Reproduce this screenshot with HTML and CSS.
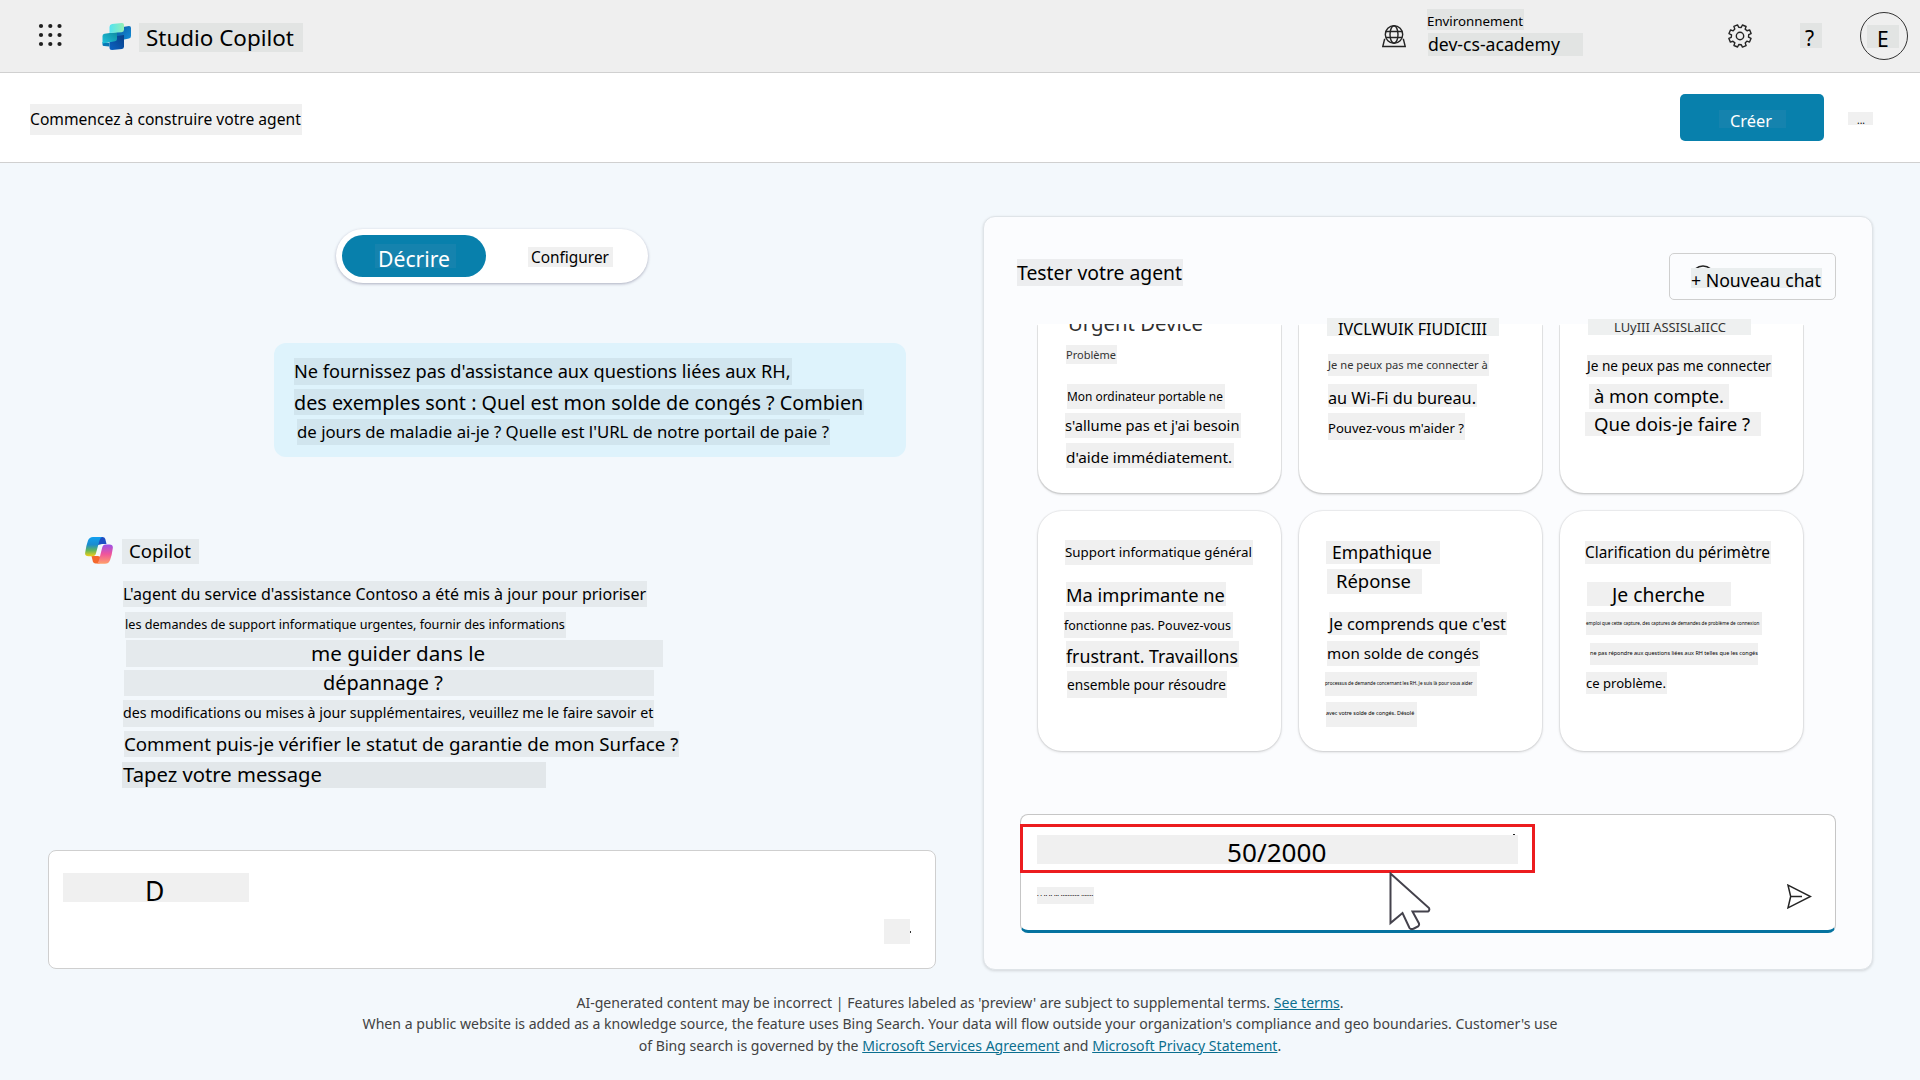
FILE: index.html
```html
<!DOCTYPE html>
<html lang="fr">
<head>
<meta charset="utf-8">
<title>Studio Copilot</title>
<link rel="stylesheet" href="styles.css">
</head>
<body>
<header class="topbar">
  <svg class="waffle" width="24" height="24" viewBox="0 0 24 24" fill="#1f1f1f"><circle cx="3" cy="3" r="2.1"/><circle cx="12.3" cy="3" r="2.1"/><circle cx="21.5" cy="3" r="2.1"/><circle cx="3" cy="12" r="2.1"/><circle cx="12.3" cy="12" r="2.1"/><circle cx="21.5" cy="12" r="2.1"/><circle cx="3" cy="21" r="2.1"/><circle cx="12.3" cy="21" r="2.1"/><circle cx="21.5" cy="21" r="2.1"/></svg>
  <svg class="studio-logo" width="29" height="27" viewBox="0 0 29 27">
    <defs>
      <linearGradient id="s1" x1="0" y1="0" x2="1" y2="0"><stop offset="0" stop-color="#53e3f2"/><stop offset="1" stop-color="#94efb4"/></linearGradient>
      <linearGradient id="s2" x1="0" y1="1" x2="1" y2="0"><stop offset="0" stop-color="#20c3dd"/><stop offset="1" stop-color="#0d8a9f"/></linearGradient>
      <linearGradient id="s3" x1="0" y1="0" x2="1" y2="1"><stop offset="0" stop-color="#0a5aa8"/><stop offset="1" stop-color="#1590d8"/></linearGradient>
      <linearGradient id="s4" x1="0" y1="1" x2="1" y2="0"><stop offset="0" stop-color="#0b63c4"/><stop offset="1" stop-color="#083f86"/></linearGradient>
    </defs>
    <path d="M15 5 L27 3 Q29 3 29 5 V13 Q29 15 27 15.500L15 18Z" fill="url(#s3)"/>
    <path d="M7.500 14 L22 12 V23.500 Q22 25.500 20 26 L10 27 Q7.500 27 7.500 24.500Z" fill="url(#s4)"/>
    <path d="M.5 19 L7.500 20 V23.500 L2 23 Q.5 23 .5 21.500Z" fill="#0878b6"/>
    <path d="M.5 13 Q.5 11 2.500 10.700 L15 9 V16 Q15 18 13 18.300 L.5 20.500Z" fill="url(#s2)"/>
    <path d="M7.500 4 Q7.500 1.500 10 1.100 L20 0 Q22 0 22 2 V6.500 Q22 9 19.500 9.200 L7.500 10Z" fill="url(#s1)"/>
  </svg>
  <span class="t t-brand">Studio Copilot</span>
  <svg class="env-icon" width="24" height="23" viewBox="0 0 24 23" fill="none" stroke="#242424" stroke-width="1.400"><circle cx="12" cy="9.500" r="8.700"/><ellipse cx="12" cy="9.500" rx="4" ry="8.700"/><path d="M4 6.500H20M4 12.500H20M3.300 14.500H2.500L.8 21.500H23.200L21.500 14.500H20.700"/></svg>
  <div class="env">
    <span class="t t-env">Environnement</span>
    <span class="t t-envname">dev-cs-academy</span>
  </div>
  <svg class="gear" width="24" height="24" viewBox="-12 -12 24 24" fill="none" stroke="#242424" stroke-width="1.400" stroke-linejoin="round"><path transform="rotate(22.500)" d="M8.300-2.130L11.100-1.980V1.980L8.300 2.130L7.540 4.530L9.340 6.540L6.540 9.340L4.530 7.540L2.130 8.300L1.980 11.100H-1.980L-2.130 8.300L-4.530 7.540L-6.540 9.340L-9.340 6.540L-7.540 4.530L-8.300 2.130L-11.100 1.980V-1.980L-8.300-2.130L-7.540-4.530L-9.340-6.540L-6.540-9.340L-4.530-7.540L-2.130-8.300L-1.980-11.100H1.980L2.130-8.300L4.530-7.540L6.540-9.340L9.340-6.540L7.540-4.530Z"/><circle r="3.700"/></svg>
  <span class="t t-help">?</span>
  <div class="avatar"><span class="t t-avatar">E</span></div>
</header>

<div class="subbar">
  <h1 class="t t-start">Commencez à construire votre agent</h1>
  <button class="create"><span class="t t-create">Créer</span></button>
  <span class="t t-more">...</span>
</div>

<main class="main">
  <section class="left">
    <div class="toggle">
      <div class="toggle-on"><span class="t t-describe">Décrire</span></div>
      <span class="t t-configure">Configurer</span>
    </div>
    <div class="bubble">
      <span class="t t-b1">Ne fournissez pas d'assistance aux questions liées aux RH,</span>
      <span class="t t-b2">des exemples sont : Quel est mon solde de congés ? Combien</span>
      <span class="t t-b3">de jours de maladie ai-je ? Quelle est l'URL de notre portail de paie ?</span>
    </div>
    <div class="speaker">
      <svg width="28" height="27" viewBox="0 0 28 27">
        <defs>
          <linearGradient id="c1" x1="0" y1="0" x2="0" y2="1"><stop offset="0" stop-color="#10a0f0"/><stop offset=".4" stop-color="#1c8ccf"/><stop offset=".7" stop-color="#64b65a"/><stop offset="1" stop-color="#f4cf14"/></linearGradient>
          <linearGradient id="c2" x1="0" y1="0" x2="0" y2="1"><stop offset="0" stop-color="#9a50e8"/><stop offset=".5" stop-color="#f0559c"/><stop offset="1" stop-color="#ffa06a"/></linearGradient>
        </defs>
        <path d="M13 0H17.500Q19.700 0 20.300 2L21.500 7H17L13 8Z" fill="#1d4fc4"/>
        <path d="M6.500 19H13L16 20L14.500 26.500H10.500Q8.500 26.500 7.900 24.500Z" fill="#f4682c"/>
        <path d="M8 0H17Q15.300.7 14.500 3.500L10.900 16.500Q10.200 19.300 7.500 19.300H3.500Q-.5 19.300.2 15.500Q1 9 3 3.500Q4.300 0 8 0Z" fill="url(#c1)"/>
        <path d="M20 26.700H11.500Q13.200 26 14 23.200L17.200 10.500Q18 7.400 20.500 7.400H24.500Q28.300 7.400 27.800 11.200Q27 17.800 25 23.200Q23.700 26.700 20 26.700Z" fill="url(#c2)"/>
      </svg>
      <span class="t t-copilot">Copilot</span>
    </div>
    <div class="answer">
      <span class="t t-a1">L'agent du service d'assistance Contoso a été mis à jour pour prioriser</span>
      <span class="t t-a2">les demandes de support informatique urgentes, fournir des informations</span>
      <span class="t t-a3">me guider dans le</span>
      <span class="t t-a4">dépannage ?</span>
      <span class="t t-a5">des modifications ou mises à jour supplémentaires, veuillez me le faire savoir et</span>
      <span class="t t-a6">Comment puis-je vérifier le statut de garantie de mon Surface ?</span>
      <span class="t t-a7">Tapez votre message</span>
    </div>
    <div class="composer">
      <span class="t t-d">D</span>
      <span class="chip"></span>
    </div>
  </section>

  <section class="panel">
    <div class="panel-head">
      <h2 class="t t-test">Tester votre agent</h2>
      <div class="new-chat">
        <svg class="new-chat-icon" width="22" height="24" viewBox="0 0 22 24" fill="none" stroke="#242424" stroke-width="1.500"><path d="M3 4Q11-1.800 19 4M0 21.800H3M8 21.800H15"/></svg>
        <span class="t t-new">+ Nouveau chat</span>
      </div>
    </div>
    <div class="cards">
      <article class="card cut">
        <div class="clip"><span>Urgent Device</span></div>
        <span class="t t-c11">Problème</span>
        <span class="t t-c12">Mon ordinateur portable ne</span>
        <span class="t t-c13">s'allume pas et j'ai besoin</span>
        <span class="t t-c14">d'aide immédiatement.</span>
      </article>
      <article class="card cut">
        <span class="t t-c21">IVCLWUIK FIUDICIII</span>
        <span class="t t-c22">Je ne peux pas me connecter à</span>
        <span class="t t-c23">au Wi-Fi du bureau.</span>
        <span class="t t-c24">Pouvez-vous m'aider ?</span>
      </article>
      <article class="card cut">
        <span class="t t-c31">LUyIII ASSISLaIICC</span>
        <span class="t t-c32">Je ne peux pas me connecter</span>
        <span class="t t-c33">à mon compte.</span>
        <span class="t t-c34">Que dois-je faire ?</span>
      </article>
      <article class="card">
        <span class="t t-c41">Support informatique général</span>
        <span class="t t-c42">Ma imprimante ne</span>
        <span class="t t-c43">fonctionne pas. Pouvez-vous</span>
        <span class="t t-c44">frustrant. Travaillons</span>
        <span class="t t-c45">ensemble pour résoudre</span>
      </article>
      <article class="card">
        <span class="t t-c51">Empathique</span>
        <span class="t t-c52">Réponse</span>
        <span class="t t-c53">Je comprends que c'est</span>
        <span class="t t-c54">mon solde de congés</span>
        <span class="t t-c55">processus de demande concernant les RH. Je suis là pour vous aider</span>
        <span class="t t-c56">avec votre solde de congés. Désolé</span>
      </article>
      <article class="card">
        <span class="t t-c61">Clarification du périmètre</span>
        <span class="t t-c62">Je cherche</span>
        <span class="t t-c63">emploi que cette capture, des captures de demandes de problème de connexion</span>
        <span class="t t-c64">ne pas répondre aux questions liées aux RH telles que les congés</span>
        <span class="t t-c65">ce problème.</span>
      </article>
    </div>
    <div class="prompt">
      <span class="t t-count">50/2000</span>
      <span class="t t-small">. . .. .. ... ........... .......</span>
      <svg class="send" width="25" height="25" viewBox="0 0 25 25" fill="none" stroke="#242424" stroke-width="1.500" stroke-linejoin="miter"><path d="M1 1.200L23.500 12.500L1 23.800L3.700 12.500ZM3.700 12.500H15"/></svg>
      <div class="focus-frame"></div>
      <svg class="cursor" width="43" height="60" viewBox="0 0 43 60" fill="#fff" stroke="#44424c" stroke-width="2"><path d="M1.500 1.500V51L13.500 41L20.500 56Q22 58 25 56.500L29 54.500Q30.500 53 30 51.500L23.500 39.500H39Q41 38.500 40 36Z"/></svg>
    </div>
  </section>
</main>

<footer class="foot">AI-generated content may be incorrect | Features labeled as 'preview' are subject to supplemental terms. <a>See terms</a>.<br>When a public website is added as a knowledge source, the feature uses Bing Search. Your data will flow outside your organization's compliance and geo boundaries. Customer's use<br>of Bing search is governed by the <a>Microsoft Services Agreement</a> and <a>Microsoft Privacy Statement</a>.</footer>
</body>
</html>
```
FILE: styles.css
```css
* { box-sizing: border-box; }
body {
  margin: 0;
  width: 1920px;
  height: 1080px;
  overflow: hidden;
  background: #f3f8fc;
  color: #000;
  font-family: "Noto Sans", "Open Sans", sans-serif;
}
h1, h2 { margin: 0; font-weight: 400; }
svg { display: block; flex: none; }

/* Highlighted text run: --x/--y offsets, --w/--h box, --f font size, --b baseline from the box top, --i indent */
.t {
  display: block;
  flex: none;
  width: var(--w);
  height: var(--h);
  margin: var(--y, 0) 0 0 var(--x, 0);
  padding-left: var(--i, 0);
  font-size: var(--f);
  line-height: calc(2 * (var(--b) - 0.388 * var(--f)));
  font-weight: 400;
  white-space: nowrap;
  background: #f0f0f0;
}

.topbar {
  display: flex;
  align-items: flex-start;
  height: 73px;
  background: #efefef;
  border-bottom: 1px solid #d0d0d0;
}
.topbar .t { background: #e2e4e3; }
.waffle { margin: 23px 0 0 38px; }
.studio-logo { margin: 23px 0 0 40px; }
.t-brand { --x: 8px; --y: 23px; --w: 164px; --h: 29px; --f: 22.42px; --b: 23.500px; --i: 7px; }
.env-icon { margin: 25px 0 0 1079px; }
.env { margin: 9px 0 0 21px; width: 156px; }
.t-env { --w: 97px; --h: 21px; --f: 13.300px; --b: 18px; }
.t-envname { --x: 1px; --y: 3px; --w: 155px; --h: 23px; --f: 17.610px; --b: 18.500px; }
.gear { margin: 24px 0 0 145px; }
.t-help { --x: 48px; --y: 23px; --w: 22px; --h: 25px; --f: 21px; --b: 23.500px; --i: 5px; }
.avatar {
  width: 48px;
  height: 48px;
  margin: 12px 0 0 38px;
  border: 1px solid #333;
  border-radius: 50%;
}
.t-avatar { --x: 6px; --y: 12px; --w: 32px; --h: 23px; --f: 21px; --b: 23px; --i: 10px; }

.subbar {
  display: flex;
  align-items: flex-start;
  height: 90px;
  background: #fff;
  border-bottom: 1px solid #d0d0d0;
}
.t-start { --x: 30px; --y: 31px; --w: 272px; --h: 31px; --f: 15.640px; --b: 21.700px; }
.create {
  display: flex;
  align-items: flex-start;
  width: 144px;
  height: 47px;
  margin: 21px 0 0 1378px;
  padding: 0;
  border: 0;
  border-radius: 5px;
  background: #0880ac;
  font-family: inherit;
  text-align: left;
}
.create .t, .toggle-on .t { background: #1583ae; color: #fff; }
.t-create { --x: 39px; --y: 16px; --w: 67px; --h: 18px; --f: 16.370px; --b: 18px; --i: 11px; }
.t-more { --x: 24px; --y: 39px; --w: 25px; --h: 13px; --f: 10px; --b: 12px; --i: 9px; }

.main { display: flex; height: 806px; align-items: flex-start; }
.left { width: 983px; flex: none; display: flex; flex-direction: column; }
.toggle {
  display: flex;
  align-items: flex-start;
  width: 312px;
  height: 54px;
  margin: 66px 0 0 336px;
  padding: 6px 6px;
  border-radius: 27px;
  background: #fff;
  box-shadow: 0 1px 3px rgba(40, 40, 80, .35);
}
.toggle-on { width: 144px; height: 42px; border-radius: 21px; background: #0880ac; }
.toggle-on .t { margin-top: 9px; }
.t-describe { --x: 33px; --w: 81px; --h: 24px; --f: 21.160px; --b: 23.500px; --i: 3px; }
.t-configure { --x: 42px; --y: 12px; --w: 85px; --h: 20px; --f: 15.420px; --b: 16.700px; --i: 3px; }

.bubble {
  width: 632px;
  height: 114px;
  margin: 60px 0 0 274px;
  padding: 15px 0 0 20px;
  border-radius: 12px;
  background: #def3fc;
}
.bubble .t { background: #d1e5ee; }
.t-b1 { --w: 498px; --h: 27px; --f: 18.200px; --b: 20.700px; }
.t-b2 { --y: 4px; --w: 570px; --h: 26px; --f: 19.750px; --b: 21.700px; }
.t-b3 { --x: 3px; --y: 4px; --w: 533px; --h: 26px; --f: 16.770px; --b: 20px; }

.speaker { display: flex; align-items: flex-start; height: 27px; margin: 80px 0 0 85px; }
.speaker .t, .answer .t { background: #e5eaed; }
.t-copilot { --x: 9px; --y: 2px; --w: 77px; --h: 25px; --f: 18.600px; --b: 19.700px; --i: 7px; }
.answer { height: 207px; margin: 17px 0 0 122px; }
.t-a1 { --x: 1px; --w: 524px; --h: 26px; --f: 16px; --b: 20px; }
.t-a2 { --x: 3px; --y: 5px; --w: 441px; --h: 26px; --f: 12.630px; --b: 17.500px; }
.t-a3 { --x: 4px; --y: 2px; --w: 537px; --h: 27px; --f: 20.600px; --b: 21.500px; --i: 185px; }
.t-a4 { --x: 2px; --y: 3px; --w: 530px; --h: 26px; --f: 19.900px; --b: 21px; --i: 199px; }
.t-a5 { --x: 1px; --y: 4px; --w: 531px; --h: 27px; --f: 14.200px; --b: 19px; }
.t-a6 { --x: 2px; --y: 4px; --w: 555px; --h: 26px; --f: 18.700px; --b: 20px; }
.answer .t-a7 { --y: 5px; --w: 424px; --h: 26px; --f: 20.260px; --b: 20.500px; --i: 1px; background: #e2e7ea; }

.composer {
  display: flex;
  align-items: flex-start;
  width: 888px;
  height: 119px;
  margin: 62px 0 0 48px;
  border: 1px solid #cfcfcf;
  border-radius: 8px;
  background: #fff;
}
.t-d { --x: 14px; --y: 22px; --w: 186px; --h: 29px; --f: 26.600px; --b: 29px; --i: 82px; }
.chip { position: relative; width: 26px; height: 25px; margin: 68px 0 0 635px; background: #f0f0f0; }
.chip::after { content: ""; position: absolute; left: 26px; top: 12px; width: 1px; height: 2px; background: #333; }

.panel {
  width: 890px;
  height: 754px;
  flex: none;
  margin-top: 53px;
  border: 1px solid #dfe4e8;
  border-radius: 12px;
  background: #fbfcfe;
  box-shadow: 0 1px 3px rgba(0, 0, 0, .14);
}
.panel-head { display: flex; align-items: flex-start; height: 107px; }
.t-test { --x: 33px; --y: 42px; --w: 166px; --h: 27px; --f: 19.330px; --b: 21px; }
.panel-head .t { background: #ecedef; }
.new-chat {
  position: relative;
  width: 167px;
  height: 47px;
  margin: 36px 0 0 486px;
  border: 1px solid #cfcfcf;
  border-radius: 5px;
}
.new-chat .t { position: relative; background: #eaeeef; }
.new-chat-icon { position: absolute; left: 22px; top: 11px; }
.t-new { --x: 21px; --y: 14px; --w: 131px; --h: 20px; --f: 17.700px; --b: 19.600px; }

.cards {
  display: grid;
  grid-template-columns: repeat(3, 243px);
  grid-template-rows: 169px 240px;
  gap: 18px;
  margin-left: 54px;
}
.card { border-radius: 24px; background: #fff; box-shadow: 0 0 1px 1px rgba(0, 0, 0, .06), 0 1px 3px rgba(0, 0, 0, .16); display: flex; flex-direction: column; }
.cut { border-radius: 0 0 24px 24px; box-shadow: 0 2px 2px rgba(0, 0, 0, .12), -1px 1px 0 #e7e8e9, 1px 1px 0 #e7e8e9; }
.clip { display: flex; align-items: flex-end; height: 13px; margin: 0 0 -1px 30px; overflow: hidden; font-size: 20.340px; line-height: 28px; color: #303030; white-space: nowrap; flex: none; }
.t-c11 { --x: 28px; --y: 9px; --w: 51px; --h: 19px; --f: 11.020px; --b: 14px; color: #333; }
.t-c12 { --x: 29px; --y: 20px; --w: 158px; --h: 25px; --f: 11.920px; --b: 17px; }
.t-c13 { --x: 27px; --y: 4px; --w: 176px; --h: 25px; --f: 14.700px; --b: 18px; }
.t-c14 { --x: 28px; --y: 5px; --w: 168px; --h: 25px; --f: 15.300px; --b: 20px; }
.cut .t-c21 { --x: 28px; --y: -6px; --w: 172px; --h: 18px; --f: 16.110px; --b: 17.700px; --i: 11px; background: #eef0f0; }
.t-c22 { --x: 29px; --y: 18px; --w: 161px; --h: 22px; --f: 11.170px; --b: 15px; color: #333; }
.t-c23 { --x: 29px; --y: 8px; --w: 149px; --h: 23px; --f: 16.240px; --b: 20.500px; }
.t-c24 { --x: 29px; --y: 6px; --w: 137px; --h: 27px; --f: 13.120px; --b: 21px; }
.cut .t-c31 { --x: 28px; --y: -5px; --w: 163px; --h: 16px; --f: 12.930px; --b: 14px; --i: 26px; background: #eef0f0; color: #333; }
.t-c32 { --x: 27px; --y: 20px; --w: 185px; --h: 22px; --f: 13.630px; --b: 16px; }
.t-c33 { --x: 29px; --y: 7px; --w: 140px; --h: 25px; --f: 18.400px; --b: 19.500px; --i: 5px; }
.t-c34 { --x: 25px; --y: 3px; --w: 176px; --h: 24px; --f: 18.580px; --b: 19.500px; --i: 9px; }
.t-c41 { --x: 27px; --y: 29px; --w: 188px; --h: 25px; --f: 13.340px; --b: 17.800px; }
.t-c42 { --x: 28px; --y: 17px; --w: 160px; --h: 24px; --f: 18.300px; --b: 20px; }
.t-c43 { --x: 26px; --y: 6px; --w: 169px; --h: 26px; --f: 12.460px; --b: 18.700px; }
.t-c44 { --x: 28px; --y: 3px; --w: 173px; --h: 26px; --f: 17.770px; --b: 22.300px; }
.t-c45 { --x: 29px; --y: 4px; --w: 160px; --h: 27px; --f: 13.710px; --b: 19px; }
.t-c51 { --x: 27px; --y: 30px; --w: 114px; --h: 23px; --f: 17.540px; --b: 18px; --i: 6px; }
.t-c52 { --x: 28px; --y: 5px; --w: 95px; --h: 25px; --f: 18.440px; --b: 19.500px; --i: 9px; }
.t-c53 { --x: 30px; --y: 18px; --w: 178px; --h: 23px; --f: 16.410px; --b: 18.500px; }
.t-c54 { --x: 28px; --y: 6px; --w: 153px; --h: 25px; --f: 15.200px; --b: 18px; }
.t-c55 { --x: 26px; --y: 6px; --w: 152px; --h: 24px; --f: 4.650px; --b: 13px; }
.t-c56 { --x: 27px; --y: 6px; --w: 91px; --h: 25px; --f: 5.400px; --b: 14px; }
.t-c61 { --x: 25px; --y: 30px; --w: 186px; --h: 23px; --f: 15.380px; --b: 18.300px; }
.t-c62 { --x: 27px; --y: 18px; --w: 144px; --h: 24px; --f: 19.320px; --b: 20.300px; --i: 25px; }
.t-c63 { --x: 26px; --y: 6px; --w: 176px; --h: 23px; --f: 4.600px; --b: 13px; }
.t-c64 { --x: 30px; --y: 8px; --w: 168px; --h: 22px; --f: 5.500px; --b: 12.500px; }
.t-c65 { --x: 26px; --y: 7px; --w: 81px; --h: 22px; --f: 13.070px; --b: 16.500px; }

.prompt {
  position: relative;
  width: 816px;
  height: 119px;
  margin: 63px 0 0 36px;
  border: 1px solid #c6c6c6;
  border-bottom: 3px solid #0573a0;
  border-radius: 8px;
  background: #fff;
}
.t-count { --x: 16px; --y: 20px; --w: 481px; --h: 29px; --f: 26.150px; --b: 28px; --i: 190px; position: relative; }
.t-count::after { content: ""; position: absolute; right: 3px; top: -1px; width: 2px; height: 1px; background: #222; }
.t-small { --x: 16px; --y: 23px; --w: 57px; --h: 17px; --f: 6.400px; --b: 9px; }
.send { position: absolute; left: 766px; top: 69px; }
.focus-frame { position: absolute; left: -1px; top: 9px; width: 515px; height: 49px; border: 3px solid #ec1c1f; }
.cursor { position: absolute; left: 368px; top: 57px; }

.foot {
  margin-top: 23px;
  text-align: center;
  font-size: 14.090px;
  line-height: 21.300px;
  color: #424242;
  white-space: nowrap;
}
.foot a { color: #0b6f8f; text-decoration: underline; }
```
